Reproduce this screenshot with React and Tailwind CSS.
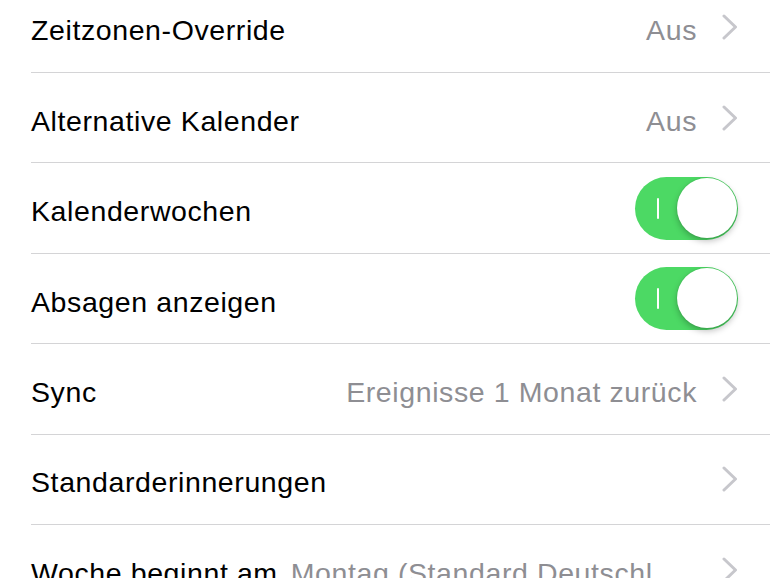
import React from 'react';

const rows = [
  { label: 'Zeitzonen-Override', value: 'Aus', type: 'link' },
  { label: 'Alternative Kalender', value: 'Aus', type: 'link' },
  { label: 'Kalenderwochen', type: 'toggle' },
  { label: 'Absagen anzeigen', type: 'toggle' },
  { label: 'Sync', value: 'Ereignisse 1 Monat zurück', type: 'link' },
  { label: 'Standarderinnerungen', value: '', type: 'link' },
  { label: 'Woche beginnt am', value: 'Montag (Standard Deutschland)', type: 'inline' },
];

function Chevron() {
  return (
    <svg width="16" height="26" viewBox="0 0 16 26" className="shrink-0">
      <path d="M2 2 L13.5 13 L2 24" fill="none" stroke="#c7c7cc" strokeWidth="3" strokeLinecap="round" strokeLinejoin="round" />
    </svg>
  );
}

function Toggle() {
  return (
    <div className="relative w-[103px] h-[63px] rounded-full bg-[#4cd964] shrink-0">
      <div className="absolute left-[22px] top-[21px] w-[2px] h-[21px] bg-white rounded-full" />
      <div className="absolute right-[1px] top-[1px] w-[60px] h-[60px] rounded-full bg-white shadow-[0_3px_6px_rgba(0,0,0,0.25),0_0_0_1px_rgba(0,0,0,0.04)]" />
    </div>
  );
}

export default function App() {
  return (
    <div className="w-[770px] h-[578px] overflow-hidden bg-white" style={{ fontFamily: '"Liberation Sans", Arial, sans-serif' }}>
      <div className="-mt-[17.4px]">
        {rows.map((row) => (
          <div key={row.label} className="pl-[31px]">
            <div className="flex items-center h-[90.4px] border-b border-[#d4d4d6] pr-[32px] text-[28.5px] tracking-[0.6px]">
              <span className="mt-[7px] text-black whitespace-nowrap">{row.label}</span>
              {row.type === 'link' && (
                <>
                  <span className="mt-[7px] ml-auto text-[#8e8e93] whitespace-nowrap">{row.value}</span>
                  <span className="ml-[25px]"><Chevron /></span>
                </>
              )}
              {row.type === 'inline' && (
                <>
                  <span className="mt-[7px] ml-[13px] text-[#8e8e93] whitespace-nowrap overflow-hidden text-ellipsis min-w-0 flex-1">{row.value}</span>
                  <span className="ml-[25px]"><Chevron /></span>
                </>
              )}
              {row.type === 'toggle' && (
                <div className="ml-auto"><Toggle /></div>
              )}
            </div>
          </div>
        ))}
      </div>
    </div>
  );
}
